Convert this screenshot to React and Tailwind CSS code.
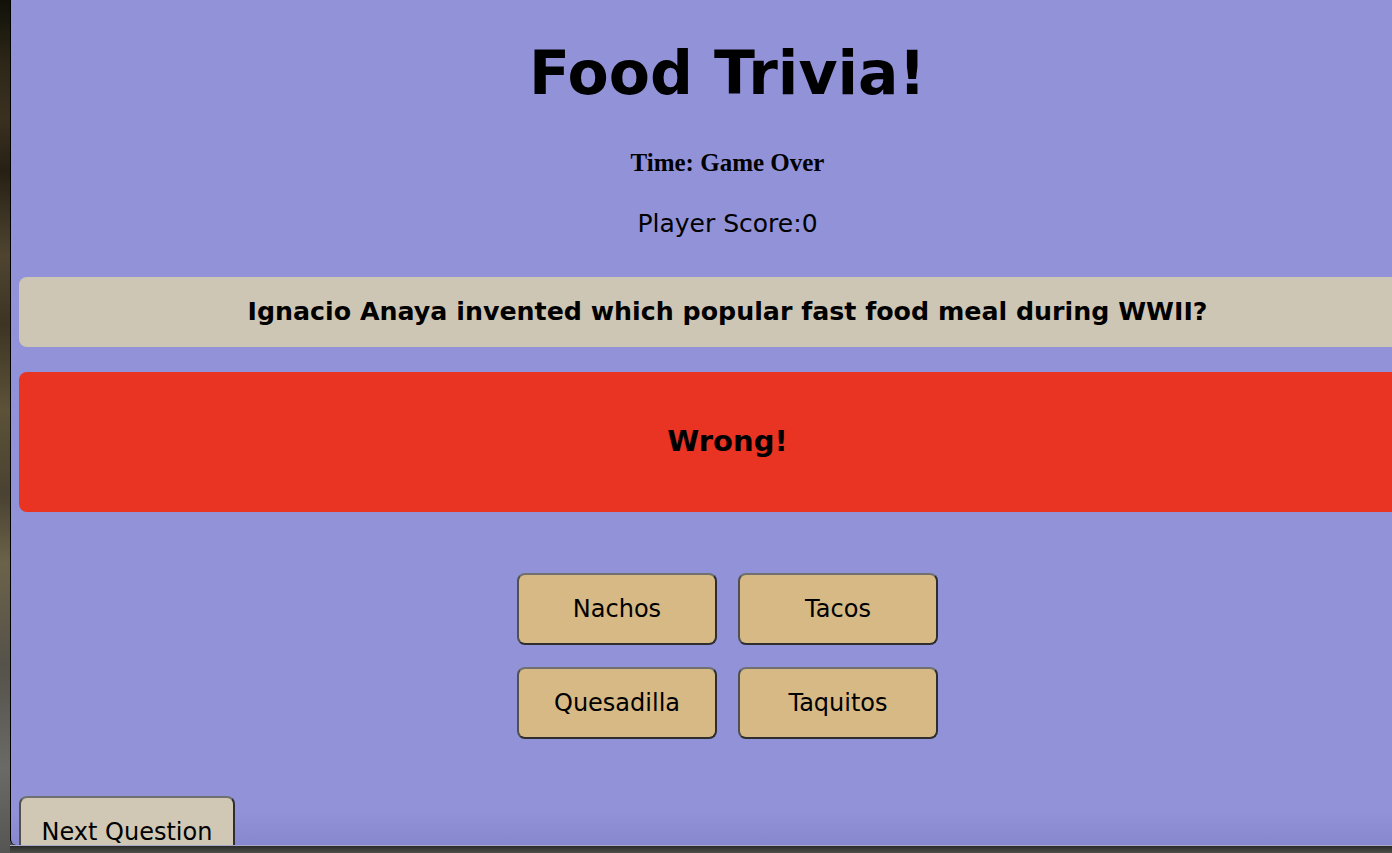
import React from "react";

const ANSWERS = ["Nachos", "Tacos", "Quesadilla", "Taquitos"];

export default function App() {
  return (
    <div className="flex h-[853px] w-full overflow-hidden bg-[#4b4b48]">
      {/* desktop strip on the left */}
      <div className="w-[10px] shrink-0 bg-[linear-gradient(180deg,#111109_0%,#2e2818_8%,#3a3020_14%,#262014_20%,#4e4430_30%,#3d3424_38%,#5c5238_48%,#4a4232_58%,#6b6249_66%,#55524a_78%,#6a6a66_90%,#555553_100%)]" />
      <div className="flex shrink-0 flex-col">
        <div
          className="flex h-[845px] w-[1434px] shrink-0 flex-col items-center overflow-hidden rounded-bl-[6px] border-l border-black bg-linear-to-b from-[#9292d9] via-[#9292d9] via-96% to-[#8787cd] px-[8px]"
          style={{ fontFamily: '"DejaVu Sans", Verdana, sans-serif' }}
        >
          <h1 className="mt-[43px] shrink-0 text-[60px] font-bold leading-none text-black">Food Trivia!</h1>
          <h3
            className="mt-[47px] shrink-0 text-[25px] font-bold leading-none text-black"
            style={{ fontFamily: '"Liberation Serif", "Times New Roman", serif' }}
          >
            Time: Game Over
          </h3>
          <p className="mt-[36px] shrink-0 text-[25px] leading-none text-black">Player Score:0</p>

          <div className="mt-[41px] flex h-[70px] w-full shrink-0 items-center justify-center rounded-[8px] bg-[#cec6b4]">
            <h2 className="text-[25.3px] font-bold text-black">Ignacio Anaya invented which popular fast food meal during WWII?</h2>
          </div>

          <div className="mt-[25px] flex h-[140px] w-full shrink-0 items-center justify-center rounded-[8px] bg-[#e93323]">
            <h2 className="text-[29px] font-bold text-black">Wrong!</h2>
          </div>

          <div className="mt-[61px] grid shrink-0 grid-cols-[200px_200px] gap-x-[21px] gap-y-[22px]">
            {ANSWERS.map((a) => (
              <button
                key={a}
                className="flex h-[72px] items-center justify-center rounded-[8px] border-2 border-[#2e2e2e] border-t-[#707070] border-l-[#505050] bg-[#d6b985] text-[24px] text-black"
              >
                {a}
              </button>
            ))}
          </div>

          <div className="mt-[57px] flex w-full shrink-0">
            <button className="flex h-[72px] w-[216px] items-center justify-center rounded-[8px] border-2 border-[#2e2e2e] border-t-[#707070] border-l-[#505050] bg-[#d0c8b5] text-[24px] text-black">
              Next Question
            </button>
          </div>
        </div>
        <div className="h-px w-full bg-[#a8a8c8]" />
        <div className="h-[7px] w-full bg-[linear-gradient(180deg,#2a2a28,#4e4e4a)]" />
      </div>
    </div>
  );
}
